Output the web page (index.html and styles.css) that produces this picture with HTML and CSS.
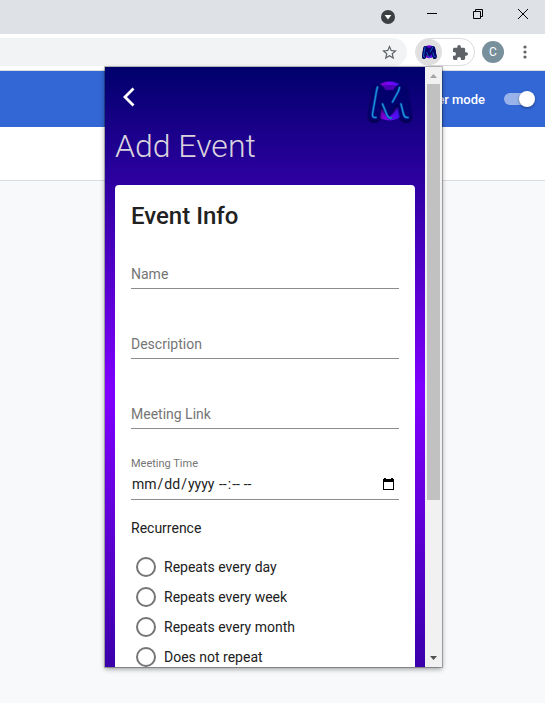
FILE: index.html
```html
<!DOCTYPE html>
<html lang="en">
<head>
<meta charset="utf-8">
<title>Add Event</title>
<link rel="stylesheet" href="styles.css">
</head>
<body>
<header class="titlebar">
  <button class="win-btn tab-search" aria-label="Search tabs"><svg width="14" height="14" viewBox="0 0 14 14"><circle cx="7" cy="7" r="7" fill="#3c4043"/><path d="M3.600 5h6.800L7 9.600z" fill="#fff"/></svg></button>
  <button class="win-btn" aria-label="Minimize"><svg width="10" height="10"><path d="M0 4.500h10" stroke="#000"/></svg></button>
  <button class="win-btn" aria-label="Restore"><svg width="10" height="10" fill="none" stroke="#000"><path d="M.5 2.500h7v7h-7zM2.500 2.500v-2h7v7h-2"/></svg></button>
  <button class="win-btn" aria-label="Close"><svg width="10" height="10"><path d="M0 0l10 10M10 0L0 10" stroke="#000"/></svg></button>
</header>
<nav class="toolbar">
  <div class="omnibox">
    <button class="icon-btn" aria-label="Bookmark"><svg width="15" height="15" viewBox="2 2 20 20"><path d="M22 9.240l-7.190-.62L12 2 9.190 8.630 2 9.240l5.460 4.730L5.820 21 12 17.270 18.180 21l-1.630-7.030L22 9.240zM12 15.400l-3.760 2.270 1-4.280-3.320-2.880 4.380-.38L12 6.100l1.710 4.040 4.380.38-3.320 2.880 1 4.280L12 15.400z" fill="#5f6368"/></svg></button>
  </div>
  <div class="extensions">
    <button class="icon-btn ext-active" aria-label="Meeting extension"><svg width="16" height="16" viewBox="0 0 48 48"><use href="#m-logo"/></svg></button>
    <button class="icon-btn" aria-label="Extensions"><svg width="15" height="15" viewBox="2 1 21 21"><path d="M20.500 11H19V7c0-1.100-.9-2-2-2h-4V3.500a2.500 2.500 0 0 0-5 0V5H4c-1.100 0-2 .9-2 2v3.800h1.500a2.700 2.700 0 0 1 0 5.400H2V20c0 1.100.9 2 2 2h3.800v-1.500a2.700 2.700 0 0 1 5.400 0V22H17c1.100 0 2-.9 2-2v-4h1.500a2.500 2.500 0 0 0 0-5z" fill="#5f6368"/></svg></button>
  </div>
  <button class="avatar" aria-label="Profile">C</button>
  <button class="icon-btn" aria-label="Menu"><svg width="4" height="14" fill="#5f6368"><circle cx="2" cy="2" r="1.600"/><circle cx="2" cy="7" r="1.600"/><circle cx="2" cy="12" r="1.600"/></svg></button>
</nav>
<div class="page-head">
  <label class="dev" for="dev-mode">Developer mode</label>
  <input class="switch" type="checkbox" id="dev-mode" checked>
</div>
<div class="page-sub"></div>

<main class="popup">
  <div class="app">
    <div class="app-head">
      <button class="back" aria-label="Back"><svg width="12" height="20" viewBox="0 0 12 20"><path d="M10.500 1.500L2 10l8.500 8.500" fill="none" stroke="#fff" stroke-width="2.800"/></svg></button>
      <svg class="logo" width="48" height="48" viewBox="0 0 48 48" aria-label="M">
        <defs>
          <linearGradient id="ring" x1="0" y1="0" x2="1" y2="0"><stop offset="0" stop-color="#7a0070"/><stop offset=".5" stop-color="#7a00ff"/><stop offset="1" stop-color="#0028e0"/></linearGradient>
          <filter id="soft" x="-20%" y="-20%" width="140%" height="140%"><feGaussianBlur stdDeviation="1"/></filter>
          <g id="m-logo">
            <circle cx="24.500" cy="23" r="19.500" fill="url(#ring)"/>
            <ellipse cx="24.500" cy="10" rx="10" ry="3" fill="#4b00b8"/>
            <g fill="none" stroke-linecap="round" stroke-linejoin="round">
              <path d="M9 39L13 13 24 31 36 13 41 39" stroke="#00003c" stroke-width="12" filter="url(#soft)"/>
              <path d="M9 37L13 12 24 27 36 12 41 37" stroke="#02006c" stroke-width="12"/>
              <path d="M17 15h15l-8 20z" fill="#02006c" stroke="#02006c" stroke-width="6"/>
              <path d="M12.500 9L11.500 13 7.500 36Q7 40 11 39.500M34.500 9.500L33.500 13 27.500 24M17.500 26L22 37Q23.500 40.500 26.500 40M36 26L38.500 36Q39.500 40 43 39.500" stroke="#0b48a8" stroke-width="2.600"/>
              <path d="M12.500 9L11.500 13 7.500 36Q7 40 11 39.500M34.500 9.500L33.500 13 27.500 24M17.500 26L22 37Q23.500 40.500 26.500 40M36 26L38.500 36Q39.500 40 43 39.500" stroke="#1e96de" stroke-width="1.100"/>
            </g>
          </g>
        </defs>
        <use href="#m-logo"/>
      </svg>
    </div>
    <h1>Add Event</h1>
    <form class="card">
      <h2>Event Info</h2>
      <div class="field"><label for="name">Name</label><input id="name" type="text"></div>
      <div class="field"><label for="desc">Description</label><input id="desc" type="text"></div>
      <div class="field"><label for="link">Meeting Link</label><input id="link" type="text"></div>
      <div class="floated">
        <label for="date">Meeting Time</label>
        <div class="when">
          <input id="date" type="date">
          <input class="time" type="time" aria-label="Meeting time of day">
        </div>
      </div>
      <fieldset>
        <legend>Recurrence</legend>
        <label class="option"><input type="radio" name="rec">Repeats every day</label>
        <label class="option"><input type="radio" name="rec">Repeats every week</label>
        <label class="option"><input type="radio" name="rec">Repeats every month</label>
        <label class="option"><input type="radio" name="rec">Does not repeat</label>
      </fieldset>
    </form>
  </div>
  <div class="scrollbar">
    <svg width="7" height="4"><path d="M0 4L3.500 0 7 4z" fill="#a3a3a3"/></svg>
    <div class="thumb"></div>
    <svg class="down" width="7" height="4"><path d="M0 0h7L3.500 4z" fill="#505050"/></svg>
  </div>
</main>
</body>
</html>
```

FILE: styles.css
```css
* { box-sizing: border-box; }
html { height: 100%; }
body {
  margin: 0;
  min-height: 100%;
  background: #f8f9fb;
  font-family: Roboto, "Liberation Sans", sans-serif;
  font-size: 14px;
  color: #212121;
  position: relative;
  overflow: hidden;
}
button { border: 0; padding: 0; background: none; font: inherit; }
svg { display: block; }

.titlebar {
  height: 34px;
  background: #dee1e6;
  display: flex;
  justify-content: flex-end;
}
.win-btn {
  width: 46px;
  height: 28px;
  display: flex;
  align-items: center;
  justify-content: center;
}
.win-btn:last-child { width: 44px; }
.tab-search { width: 42px; height: 34px; }

.toolbar {
  height: 37px;
  padding: 4px 12px 4px 0;
  background: #fff;
  border-bottom: 1px solid #dadce0;
  display: flex;
  align-items: center;
}
.omnibox {
  flex: 1;
  height: 28px;
  padding-right: 4px;
  background: #f1f3f4;
  border-radius: 0 14px 14px 0;
  display: flex;
  justify-content: flex-end;
}
.icon-btn {
  width: 28px;
  height: 28px;
  display: flex;
  align-items: center;
  justify-content: center;
}
.toolbar > .icon-btn { width: 16px; }
.extensions {
  width: 60px;
  height: 28px;
  margin: 0 7px 0 8px;
  border: 1px solid #dadce0;
  border-radius: 14px;
  display: flex;
  align-items: center;
  gap: 5px;
}
.ext-active { width: 26px; height: 26px; background: #dfdfe0; border-radius: 50%; }
.avatar {
  width: 22px;
  height: 22px;
  margin-right: 13px;
  border-radius: 50%;
  background: #78909c;
  color: #fff;
  font-size: 12px;
}

.page-head {
  height: 56px;
  padding-right: 10px;
  background: #3367d6;
  color: #fff;
  display: flex;
  align-items: center;
  justify-content: flex-end;
  gap: 19px;
}
.dev { font-size: 13px; font-weight: 500; }
.switch {
  appearance: none;
  margin: 0;
  width: 31px;
  height: 12px;
  border-radius: 6px;
  background: #99b3ea;
  display: flex;
  align-items: center;
  justify-content: flex-end;
}
.switch::before {
  content: "";
  width: 16px;
  height: 16px;
  flex: none;
  border-radius: 50%;
  background: #fff;
  box-shadow: 0 1px 3px rgba(0, 0, 0, .4);
}
.page-sub { height: 54px; background: #fff; border-bottom: 1px solid #dadce0; }

.popup {
  position: absolute;
  top: 67px;
  right: 103px;
  width: 337px;
  height: 600px;
  display: flex;
  overflow: hidden;
  box-shadow: 0 0 0 1px rgba(0, 0, 0, .25), 0 2px 5px rgba(0, 0, 0, .4);
}
.app {
  flex: 1;
  padding: 0 10px;
  background: linear-gradient(#00006c, #8000ff 54%, #3b00aa);
}
.app-head {
  display: flex;
  justify-content: space-between;
  align-items: center;
  height: 60px;
  padding: 10px 2px 0 8px;
}
.back { display: flex; padding-bottom: 10px; }
h1 {
  margin: 0;
  height: 58px;
  font-size: 32px;
  line-height: 38px;
  font-weight: 300;
  color: #d9d3dd;
}
.card {
  padding: 16px 16px 0;
  background: #fff;
  border-radius: 4px 4px 0 0;
}
h2 {
  margin: 0 0 28px;
  font-size: 24px;
  line-height: 30px;
  font-weight: 500;
}
.field {
  height: 30px;
  margin-bottom: 40px;
  display: grid;
}
.field label, .field input { grid-area: 1 / 1; }
.field label {
  align-self: center;
  color: #757575;
  line-height: 20px;
}
.field input {
  min-width: 0;
  padding: 0;
  border: 0;
  border-bottom: 1px solid #8c8c8c;
  background: transparent;
  font: inherit;
  color: inherit;
}
.floated { margin-top: -13px; }
.floated label {
  display: block;
  font-size: 11px;
  line-height: 16px;
  color: #757575;
}
.when {
  display: flex;
  height: 28px;
  padding-bottom: 4px;
  border-bottom: 1px solid #8c8c8c;
}
.when input {
  min-width: 0;
  padding: 0;
  border: 0;
  background: transparent;
  font: inherit;
  color: inherit;
}
.when input[type="date"] { width: 85px; }
.when input[type="date"]::-webkit-calendar-picker-indicator { display: none; }
.when .time { flex: 1; margin-left: 2px; padding-right: 4px; }
.time::-webkit-calendar-picker-indicator {
  width: 13px;
  height: 13px;
  padding: 0;
  background: url("data:image/svg+xml,%3Csvg xmlns='http://www.w3.org/2000/svg' viewBox='0 0 13 13'%3E%3Cpath d='M2 1h2v1h5V1h2v1h1v11H1V2h1zM2 5v7h9V5z' fill-rule='evenodd'/%3E%3C/svg%3E") center / 13px no-repeat;
}

fieldset { margin: 18px 0 0; padding: 0; border: 0; }
legend { padding: 0; margin-bottom: 14px; line-height: 20px; }
.option {
  display: flex;
  align-items: center;
  gap: 8px;
  height: 30px;
  padding-left: 5px;
}
.option input {
  appearance: none;
  margin: 0;
  width: 20px;
  height: 20px;
  border: 2px solid #757575;
  border-radius: 50%;
}
.scrollbar {
  width: 17px;
  background: #f1f1f1;
  display: flex;
  flex-direction: column;
  align-items: center;
  padding: 7px 0;
}
.thumb { width: 13px; height: 416px; margin-top: 6px; background: #c1c1c1; }
.down { margin-top: auto; }
```
